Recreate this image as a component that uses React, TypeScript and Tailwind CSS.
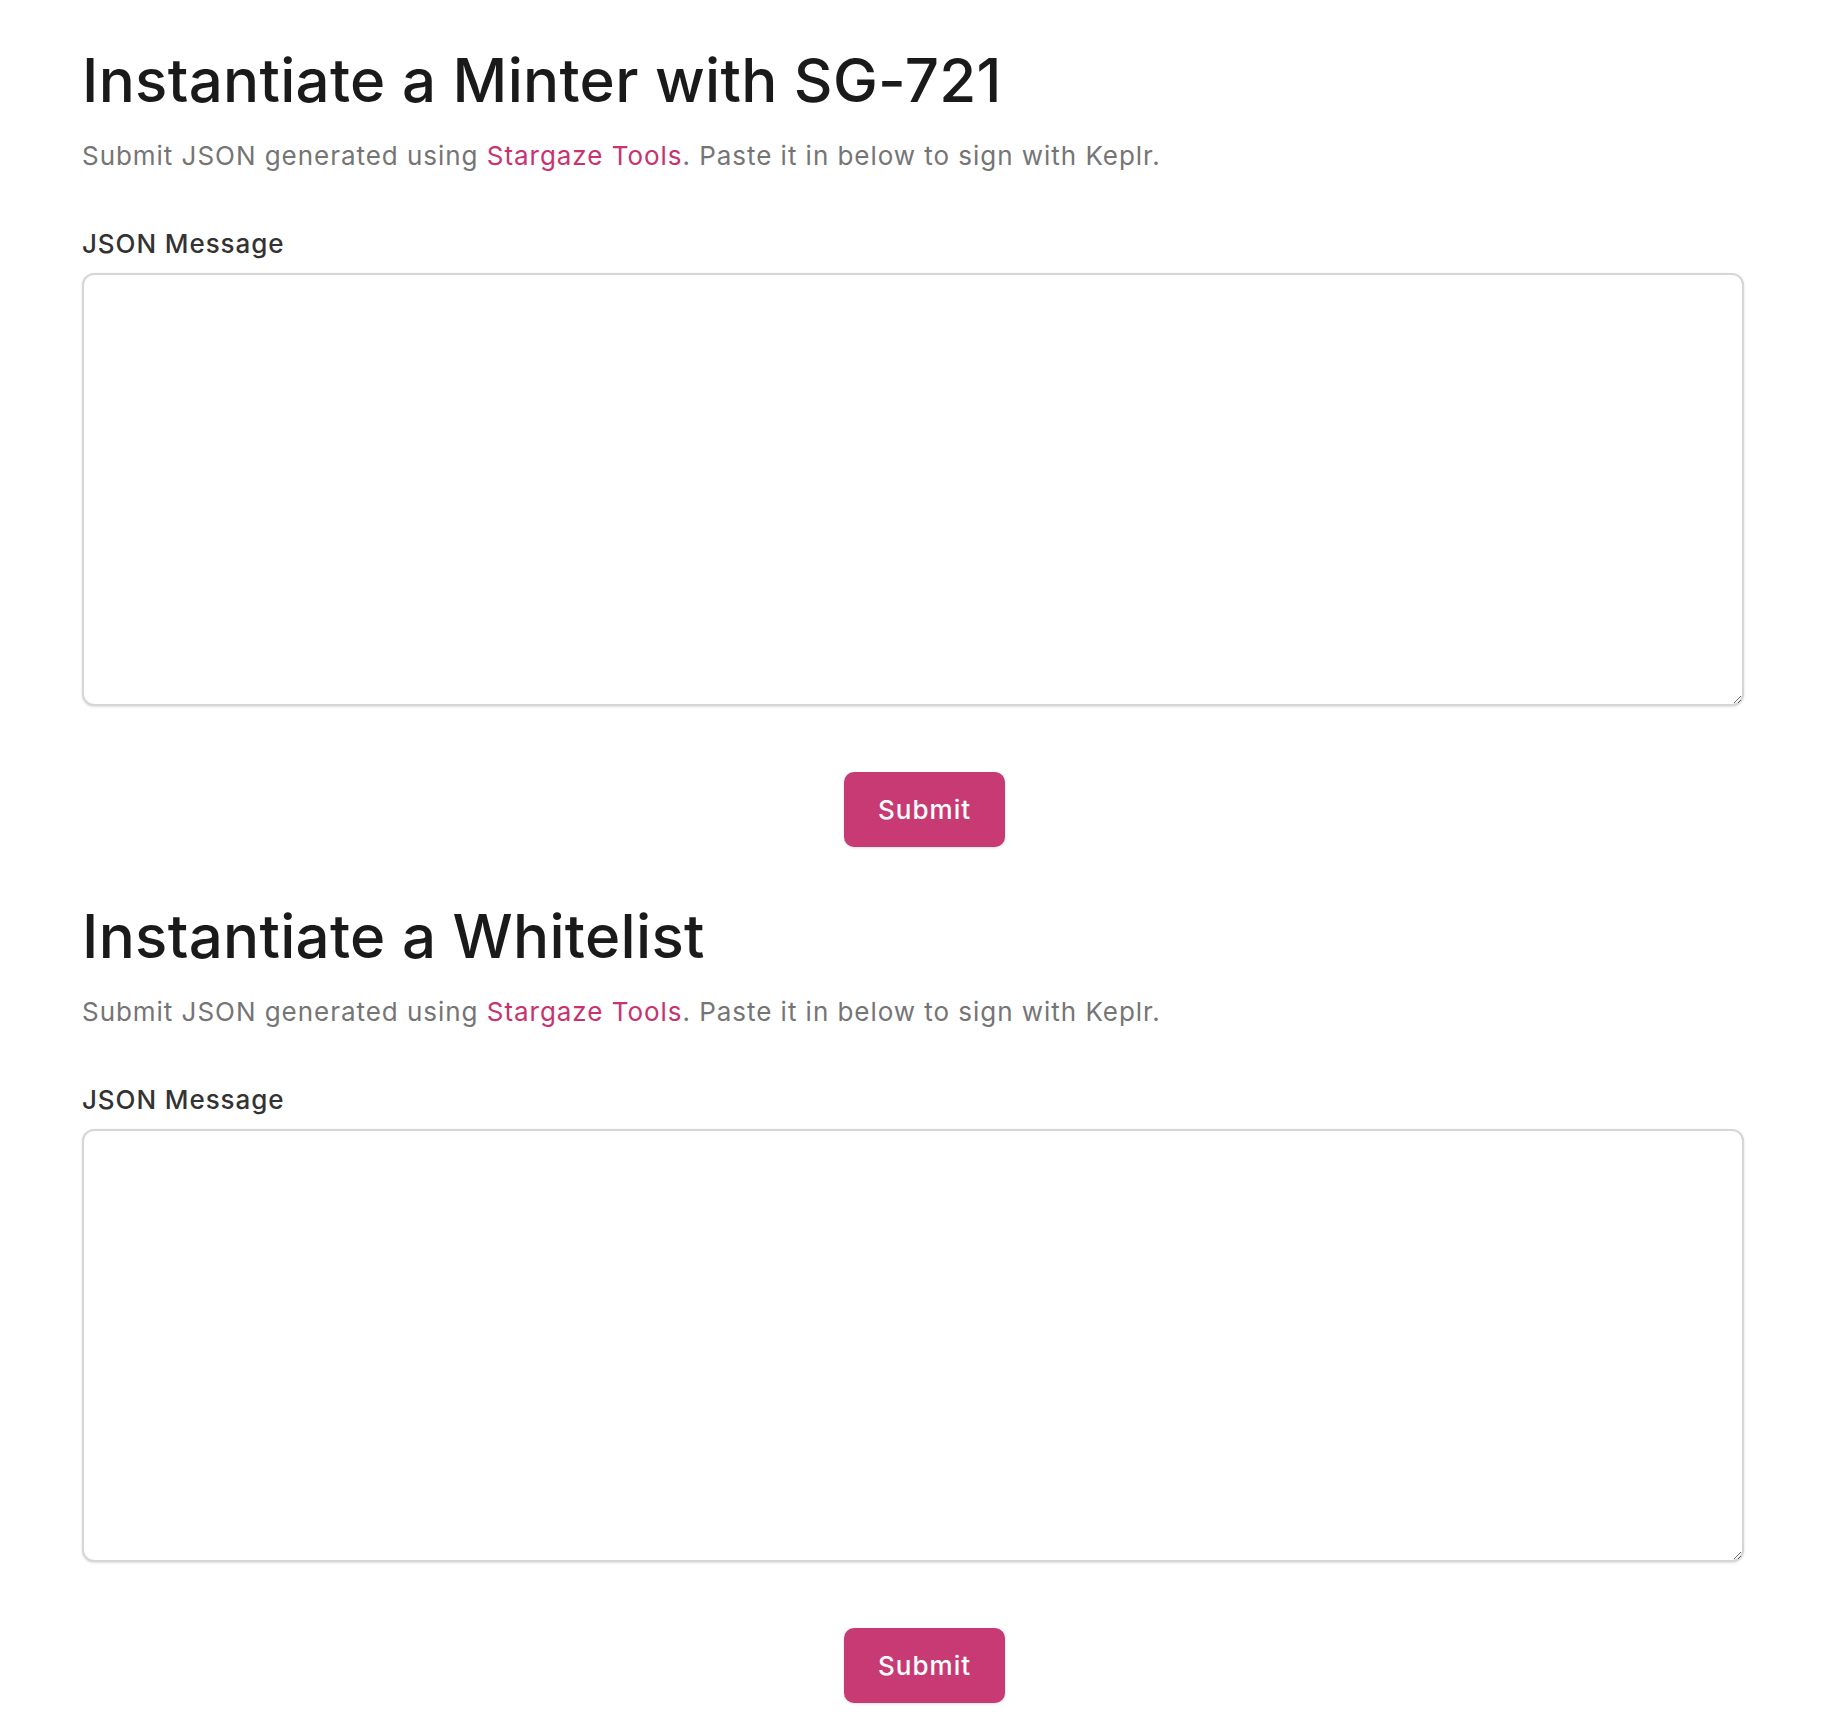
import React from "react";

function Section({ title }: { title: string }) {
  return (
    <section className="flex flex-col">
      <h1 className="text-[60px] leading-none font-medium tracking-[0.005em] text-[#1a1a1a]">{title}</h1>
      <p className="mt-[26px] text-[26px] leading-[1.5] tracking-[0.037em] text-[#757575]">
        Submit JSON generated using <a className="text-[#c8336f]" href="#">Stargaze Tools</a>. Paste it in below to sign with Keplr.
      </p>
      <label className="mt-[49px] text-[26px] leading-[1.5] font-medium tracking-[0.035em] text-[#333333]">JSON Message</label>
      <textarea className="mt-[10px] h-[433px] w-full rounded-[12px] border-2 border-[#d6d6d6] bg-white shadow-sm outline-none" />
      <div className="mt-[66px] flex justify-center">
        <button className="ml-[23px] h-[75px] w-[161px] rounded-[10px] bg-[#c73a73] text-[26px] font-medium tracking-[0.04em] text-white shadow-sm">
          Submit
        </button>
      </div>
    </section>
  );
}

export default function App() {
  return (
    <div className="min-h-[1734px] bg-white font-['Inter',sans-serif]">
      <div className="ml-[82px] mr-[88px] flex flex-col gap-[59px] pt-[50px] pb-[31px]">
        <Section title="Instantiate a Minter with SG-721" />
        <Section title="Instantiate a Whitelist" />
      </div>
    </div>
  );
}
